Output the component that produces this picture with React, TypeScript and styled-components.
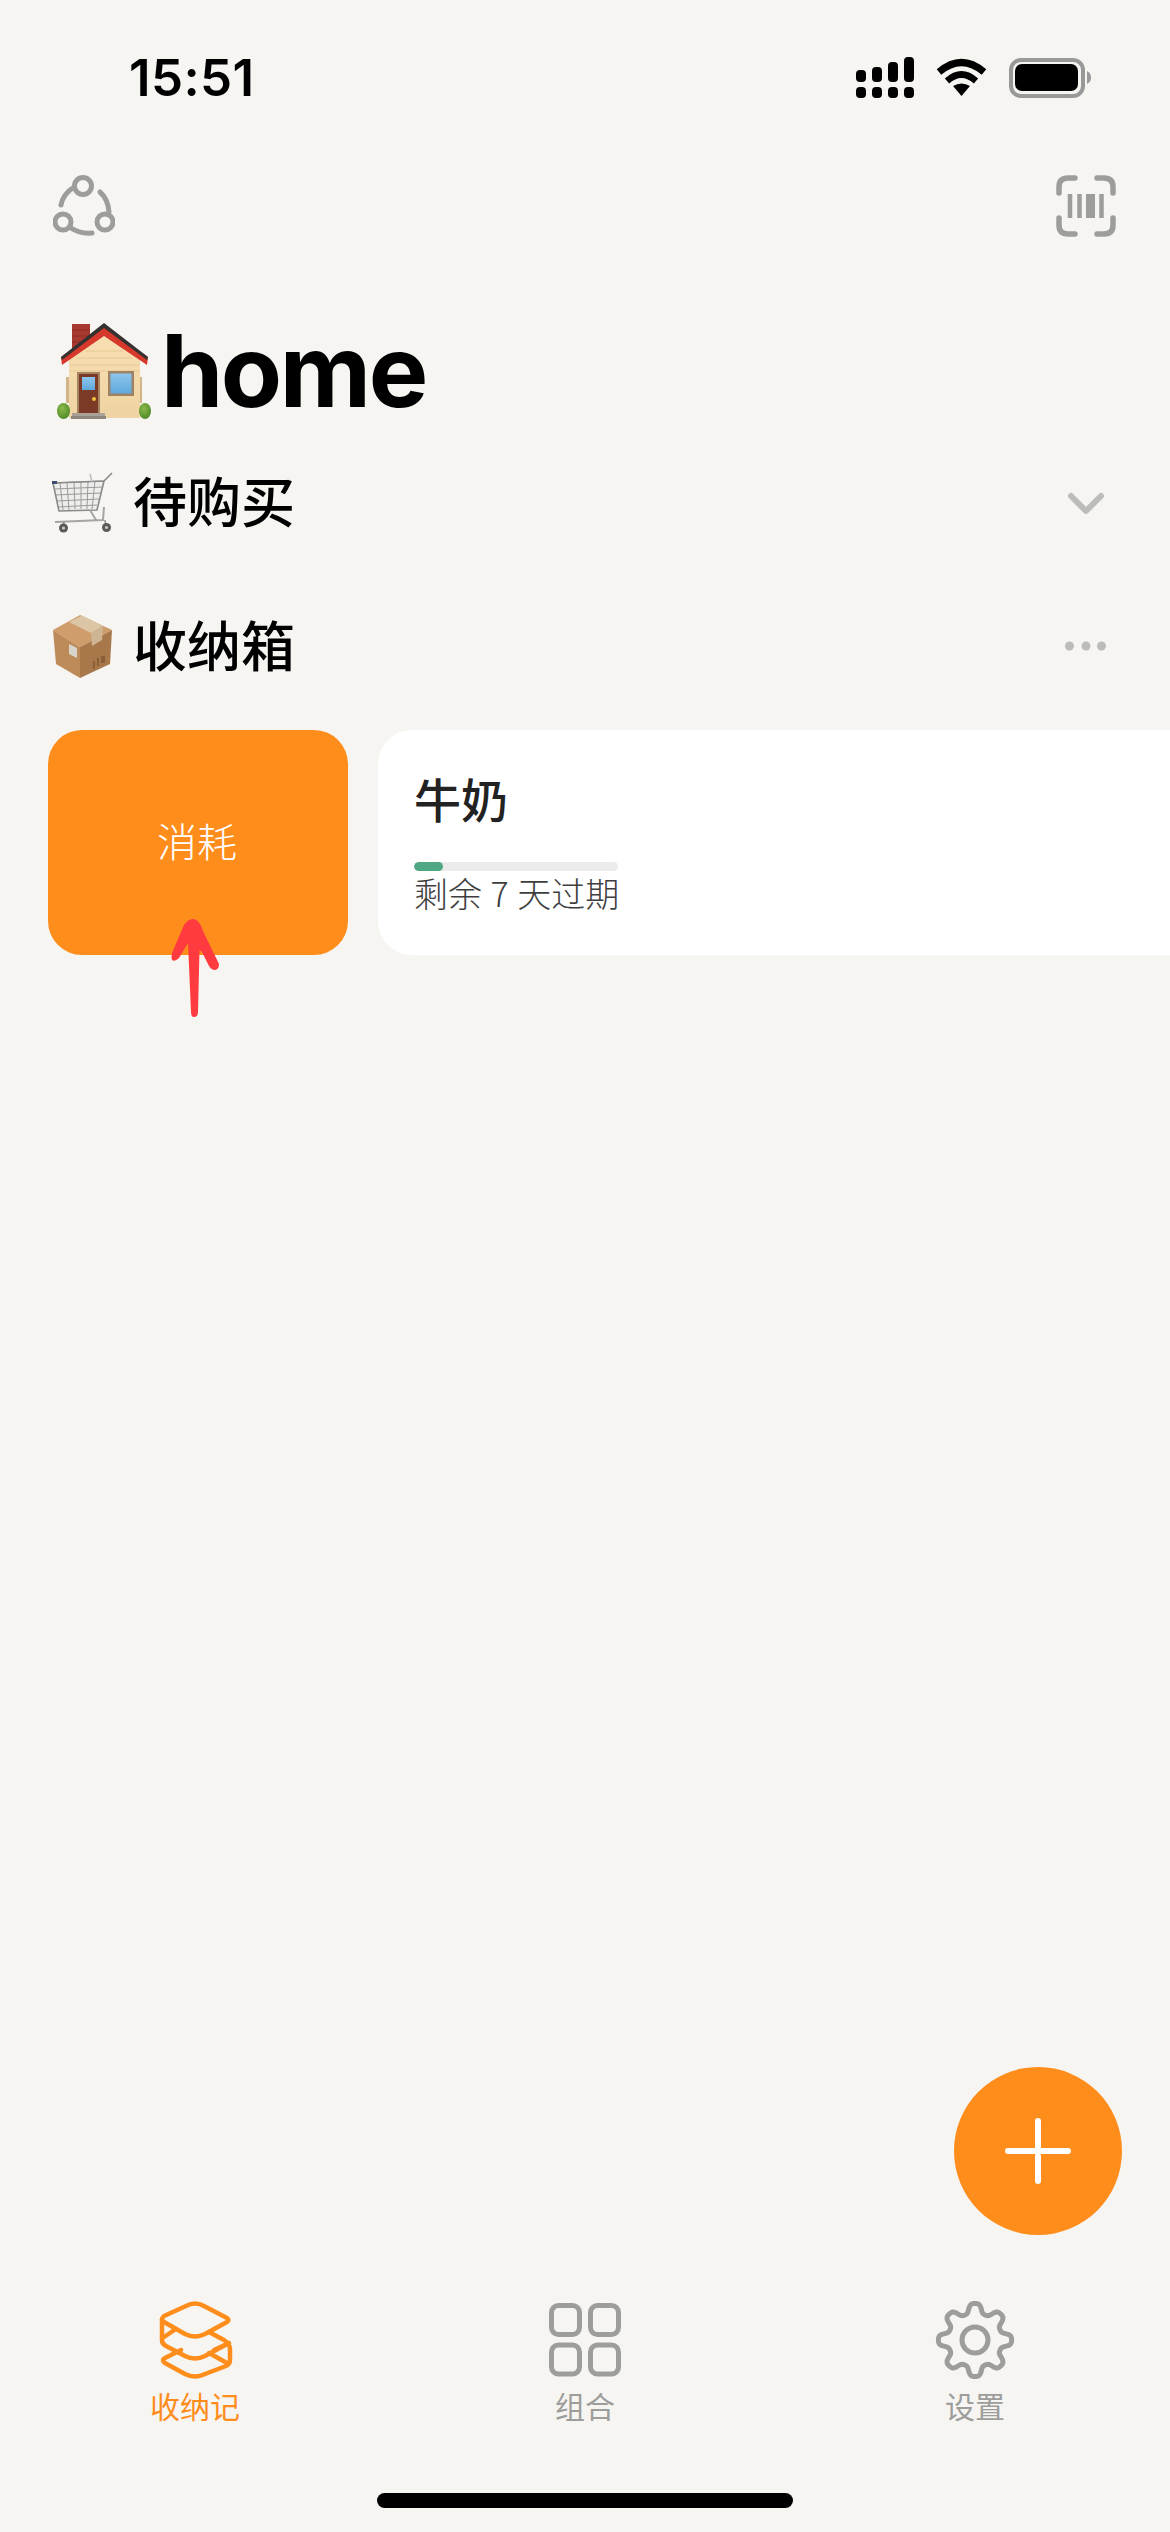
import React from "react";
import styled, { createGlobalStyle } from "styled-components";

const ORANGE = "#ff8d1c";
const GREY = "#9d9d9b";
const CJK = `"Noto Sans CJK SC", "Noto Sans", sans-serif`;

const Global = createGlobalStyle`
  html, body { margin: 0; padding: 0; background: #f6f5f2; }
  * { box-sizing: border-box; }
`;

const Page = styled.div`
  position: relative;
  width: 1170px;
  height: 2532px;
  overflow: hidden;
  display: flex;
  flex-direction: column;
  background: #f6f5f2;
  font-family: Inter, ${CJK};
`;

const StatusBar = styled.div`
  height: 175px;
  padding: 56px 79px 0 129px;
  display: flex;
  justify-content: space-between;
  align-items: flex-start;
`;
const Clock = styled.div`
  font-size: 51px;
  line-height: 44px;
  font-weight: 600;
  letter-spacing: 0.4px;
  color: #000;
`;
const StatusIcons = styled.svg`
  display: block;
  width: 235px;
  height: 44px;
`;

const TopBar = styled.div`
  height: 62px;
  padding: 0 53px;
  display: flex;
  justify-content: space-between;
  align-items: center;
`;
const Title = styled.h1`
  margin: 81px 0 0 57px;
  height: 105px;
  display: flex;
  align-items: center;
  gap: 10px;
  font-size: 100px;
  line-height: 105px;
  font-weight: 700;
  letter-spacing: -2.4px;
  color: #000;
`;
const Section = styled.div<{ $mt: number }>`
  margin-top: ${(p) => p.$mt}px;
  height: 64px;
  padding: 0 64px 0 52px;
  display: flex;
  align-items: center;
`;
const SectionName = styled.div`
  margin-left: 20px;
  flex: 1;
  padding-bottom: 4px;
  font-family: ${CJK};
  font-size: 54px;
  line-height: 60px;
  font-weight: 500;
  color: #000;
`;
const CardRow = styled.div`
  margin-top: 52px;
  padding-left: 48px;
  display: flex;
  gap: 30px;
  height: 225px;
`;
const ActionCard = styled.div`
  position: relative;
  width: 300px;
  border-radius: 34px;
  background: ${ORANGE};
  display: flex;
  align-items: center;
  justify-content: center;
  padding: 0 2px 5px 0;
  font-family: ${CJK};
  font-size: 40px;
  font-weight: 300;
  color: #fff;
`;
const ArrowMark = styled.svg`
  position: absolute;
  left: 120px;
  top: 185px;
  width: 54px;
  height: 105px;
`;
const ItemCard = styled.div`
  flex: 1;
  border-radius: 34px 0 0 34px;
  background: #fff;
  padding: 40px 0 0 36px;
`;
const ItemName = styled.div`
  font-family: ${CJK};
  font-size: 47px;
  line-height: 56px;
  font-weight: 500;
  color: #222;
`;
const Track = styled.div`
  margin-top: 36px;
  width: 204px;
  height: 9px;
  border-radius: 5px;
  background: #ebebeb;
  overflow: hidden;
`;
const Fill = styled.div`
  height: 100%;
  border-radius: 5px;
  background: #4fa883;
`;
const Remaining = styled.div`
  margin-top: 1px;
  font-family: ${CJK};
  font-size: 34px;
  line-height: 42px;
  font-weight: 300;
  word-spacing: 1px;
  color: #3f3f3f;
  white-space: nowrap;
`;
const Spacer = styled.div`
  flex: 1;
`;
const Fab = styled.div`
  position: absolute;
  left: 954px;
  top: 2067px;
  width: 168px;
  height: 168px;
  border-radius: 50%;
  background: ${ORANGE};
  display: flex;
  align-items: center;
  justify-content: center;
`;
const TabBar = styled.nav`
  display: grid;
  grid-template-columns: repeat(3, 390px);
`;
const Tab = styled.div<{ $active?: boolean }>`
  display: flex;
  flex-direction: column;
  align-items: center;
  gap: 3px;
  font-family: ${CJK};
  font-size: 30px;
  line-height: 44px;
  font-weight: 400;
  color: ${(p) => (p.$active ? ORANGE : GREY)};
`;
const TabIcon = styled.svg`
  display: block;
  width: 80px;
  height: 80px;
`;
const HomeLine = styled.div`
  margin: 66px auto 24px;
  width: 416px;
  height: 15px;
  border-radius: 8px;
  background: #000;
`;

const gearPath = (() => {
  const pts: string[] = [];
  for (let i = 0; i < 240; i++) {
    const t = (i / 240) * Math.PI * 2;
    const w = Math.tanh(1.6 * Math.cos(8 * t)) / Math.tanh(1.6);
    const r = 31.8 + 4.8 * w;
    pts.push(`${(40 + r * Math.cos(t)).toFixed(2)} ${(40 + r * Math.sin(t)).toFixed(2)}`);
  }
  return `M${pts.join("L")}Z`;
})();

const HouseEmoji = () => (
  <svg width="94" height="96" viewBox="57 322 94 96" style={{ flex: "none" }}>
    <defs>
      <linearGradient id="wall" x1="0" y1="0" x2="0" y2="1">
        <stop offset="0" stopColor="#f8e0b4" />
        <stop offset="1" stopColor="#efd3a2" />
      </linearGradient>
      <linearGradient id="glass" x1="0" y1="0" x2="0" y2="1">
        <stop offset="0" stopColor="#8cc6ec" />
        <stop offset="1" stopColor="#5fa8dc" />
      </linearGradient>
      <radialGradient id="bush" cx=".4" cy=".35" r=".7">
        <stop offset="0" stopColor="#8cb84a" />
        <stop offset="1" stopColor="#4c8a26" />
      </radialGradient>
    </defs>
    <rect x="72" y="323" width="18" height="28" fill="#a8392f" />
    <path d="M72 329H90M72 335H90M72 341H90" stroke="#8f2d25" strokeWidth="1" />
    <rect x="66" y="376" width="3" height="26" fill="#d2b38a" />
    <rect x="139" y="376" width="3" height="26" fill="#d2b38a" />
    <path d="M69 358 L104 330 L140 358 V417 H69Z" fill="url(#wall)" />
    <path d="M85 350H123M76 357H132M70 364H139M70 370H139" stroke="#e4c691" strokeWidth="0.8" />
    <path d="M61 356 L104 325 L148 356 L147 364 L104 335 L62 364Z" fill="#d6392c" />
    <path d="M61 356 L104 322 L148 356 L147 359 L104 327 L62 359Z" fill="#35312f" />
    <rect x="77" y="371" width="23" height="41" fill="#a58462" />
    <rect x="79" y="373" width="19" height="39" fill="#7b3a26" />
    <rect x="82" y="376" width="13" height="13" fill="url(#glass)" />
    <circle cx="94" cy="398" r="2" fill="#f3c23c" />
    <rect x="108" y="370" width="26" height="25" fill="#9d8266" />
    <rect x="110.500" y="372.500" width="21" height="20" fill="url(#glass)" />
    <rect x="72" y="412" width="33" height="3" fill="#a9a196" />
    <rect x="71" y="415" width="35" height="3" fill="#8d867c" />
    <ellipse cx="63.500" cy="410" rx="6.500" ry="8" fill="url(#bush)" />
    <ellipse cx="145" cy="410" rx="6" ry="8" fill="url(#bush)" />
  </svg>
);

const CartEmoji = () => (
  <svg width="61" height="61" viewBox="52 472 61 61" style={{ flex: "none" }}>
    <path d="M53 483 L104 481 L97 509 L59 510Z" fill="#e6e6e6" opacity=".55" />
    <path
      d="M53 483L104 481M54 489L103 487M55 495L101 493M57 501L99 499M58 507L97 505M60 483L63 510M67 483L69 510M74 482L75 509M81 482L81 509M88 482L87 509M95 481L92 509"
      stroke="#9b9b9b"
      strokeWidth="1"
      fill="none"
    />
    <path d="M53 483 L104 481 L112 473 M104 481 L97 510 L59 511 L53 483" stroke="#8a8a8a" strokeWidth="1.600" fill="none" />
    <path d="M90 474 L92 482" stroke="#bbb" strokeWidth="1.500" />
    <rect x="52" y="481" width="5" height="3" fill="#3c4c74" />
    <path d="M55 522 L103 520 L104 507 M90 510 L96 520" stroke="#a5a5a5" strokeWidth="2" fill="none" />
    <path d="M64 522 L63 527 M105 520 L106 527" stroke="#888" strokeWidth="1.500" />
    <circle cx="63.500" cy="528" r="4.500" fill="#5c5a58" />
    <circle cx="63.500" cy="528" r="1.600" fill="#c9c9c9" />
    <circle cx="106.500" cy="527.500" r="4.500" fill="#5c5a58" />
    <circle cx="106.500" cy="527.500" r="1.600" fill="#c9c9c9" />
  </svg>
);

const BoxEmoji = () => (
  <svg width="61" height="63" viewBox="52 615 61 63" style={{ flex: "none" }}>
    <path d="M80 615 L112 630 L80 647 L53 630Z" fill="#cf9d6b" />
    <path d="M53 630 L80 647 L80 678 L56 664Z" fill="#bd8b59" />
    <path d="M112 630 L80 647 L80 678 L110 664Z" fill="#a9784a" />
    <path d="M69 622 L82 615.500 L103 626 L91 633Z" fill="#dcc6a6" />
    <path d="M91 633 L103 626 L102 640 L92 646Z" fill="#cdb594" />
    <path d="M69 644 L77 648 L77 658 L69 654Z" fill="#d9d5cc" />
    <path d="M94 661v8M98 658v8M104 656v7M102 656v7" stroke="#7f5532" strokeWidth="1.400" />
  </svg>
);

const ShareIcon = () => (
  <svg width="62" height="62" viewBox="53 175 62 62" fill="none" stroke={GREY} strokeWidth="5" strokeLinecap="round">
    <circle cx="83" cy="186" r="8.500" />
    <circle cx="63" cy="222" r="8" />
    <circle cx="105" cy="222" r="8" />
    <path d="M61 205 Q63 194 74 187" />
    <path d="M100 192 Q108 199 109 212" />
    <path d="M71 228 Q80 234 92 233" />
  </svg>
);

const BarcodeIcon = () => (
  <svg width="62" height="62" viewBox="1055 176 62 62" fill="none" stroke={GREY} strokeWidth="5.500" strokeLinecap="round">
    <path d="M1059 194V188Q1059 179 1068 179H1075" />
    <path d="M1097 179H1104Q1113 179 1113 188V194" />
    <path d="M1059 219V226Q1059 235 1068 235H1075" />
    <path d="M1097 235H1104Q1113 235 1113 226V219" />
    <path d="M1070 195V219M1079.500 195V219M1101.500 195V219" strokeLinecap="butt" strokeWidth="4.500" />
    <path d="M1090.500 195V219" strokeLinecap="butt" strokeWidth="9" />
  </svg>
);

export default function App() {
  return (
    <Page>
      <Global />
      <StatusBar>
        <Clock>15:51</Clock>
        <StatusIcons viewBox="856 56 235 44">
          <g fill="#000">
            <rect x="856" y="70" width="10" height="12" rx="4" />
            <rect x="872" y="67" width="10" height="15" rx="4" />
            <rect x="888" y="62" width="10" height="20" rx="4" />
            <rect x="904" y="57" width="10" height="25" rx="4" />
            <rect x="856" y="87" width="10" height="11" rx="4" />
            <rect x="872" y="87" width="10" height="11" rx="4" />
            <rect x="888" y="87" width="10" height="11" rx="4" />
            <rect x="904" y="87" width="10" height="11" rx="4" />
            <path d="M953 86 Q961.500 81 970 86 L961.500 96Z" />
          </g>
          <path d="M939 72 Q961.500 53 984 72" stroke="#000" strokeWidth="7" fill="none" />
          <path d="M947 81 Q961.500 68 976 81" stroke="#000" strokeWidth="6.500" fill="none" />
          <rect x="1011" y="60" width="72" height="36" rx="10" fill="none" stroke="#999" strokeWidth="4" />
          <rect x="1015" y="64" width="63" height="27" rx="7" fill="#000" />
          <path d="M1087 71 Q1091 73 1091 77.500 Q1091 82 1087 84Z" fill="#999" />
        </StatusIcons>
      </StatusBar>

      <TopBar>
        <ShareIcon />
        <BarcodeIcon />
      </TopBar>

      <Title>
        <HouseEmoji />
        home
      </Title>

      <Section $mt={47}>
        <CartEmoji />
        <SectionName>待购买</SectionName>
        <svg width="42" height="24" viewBox="1064 490 42 24" fill="none" stroke="#bcbcba" strokeWidth="6" strokeLinecap="round" strokeLinejoin="round">
          <path d="M1071 496 L1086 511 L1101 496" />
        </svg>
      </Section>

      <Section $mt={80}>
        <BoxEmoji />
        <SectionName>收纳箱</SectionName>
        <svg width="42" height="10" viewBox="1064 641 42 10" fill="#bcbcba">
          <circle cx="1069.500" cy="646" r="4.500" />
          <circle cx="1086" cy="646" r="4.500" />
          <circle cx="1101.500" cy="646" r="4.500" />
        </svg>
      </Section>

      <CardRow>
        <ActionCard>
          消耗
          <ArrowMark viewBox="168 915 54 105">
            <path
              d="M193 919C198 919 201 925 203 931L219 964Q219 970 214 970Q210 969 208 964L202 952L199.500 950L198 1012Q198 1017 194 1017Q191 1017 191 1012L188 943L179 958Q175 962 172 960Q171 957 172 953L184 925Q188 919 193 919Z"
              fill="#ff3b40"
            />
          </ArrowMark>
        </ActionCard>
        <ItemCard>
          <ItemName>牛奶</ItemName>
          <Track>
            <Fill style={{ width: `${(29 / 204) * 100}%` }} />
          </Track>
          <Remaining>剩余 7 天过期</Remaining>
        </ItemCard>
      </CardRow>

      <Spacer />

      <Fab>
        <svg width="66" height="66" viewBox="0 0 66 66" stroke="#fff" strokeWidth="6" strokeLinecap="round">
          <path d="M3 33H63M33 3V30M33 38V63" />
        </svg>
      </Fab>

      <TabBar>
        <Tab $active>
          <TabIcon viewBox="155 2300 80 80" fill="none" stroke={ORANGE} strokeWidth="4.500" strokeLinejoin="round" strokeLinecap="round">
            <path d="M186 2306Q195 2301 204 2306L227 2318Q230 2320 227 2322L205 2334Q195 2339 185 2334L164 2322Q160 2320 164 2316Z" />
            <path d="M162 2319V2340Q162 2344 166 2346L185 2356Q195 2361 205 2356L229 2343" />
            <path d="M209 2332L224 2340Q230 2344 230 2349V2360Q230 2364 226 2366L205 2374Q195 2379 185 2374L165 2363Q161 2360 165 2358L181 2350" />
            <path d="M176 2329L164 2337M214 2350L227 2344M209 2353L227 2363" />
          </TabIcon>
          收纳记
        </Tab>
        <Tab>
          <TabIcon viewBox="545 2300 80 80" fill="none" stroke={GREY} strokeWidth="5">
            <rect x="551.500" y="2305.500" width="28" height="29" rx="7" />
            <rect x="590.500" y="2305.500" width="28" height="29" rx="7" />
            <rect x="551.500" y="2345" width="28" height="29" rx="7" />
            <rect x="590.500" y="2345" width="28" height="29" rx="7" />
          </TabIcon>
          组合
        </Tab>
        <Tab>
          <TabIcon viewBox="0 0 80 80" fill="none" stroke={GREY} strokeWidth="5">
            <path d={gearPath} strokeLinejoin="round" />
            <circle cx="40" cy="40" r="13" />
          </TabIcon>
          设置
        </Tab>
      </TabBar>
      <HomeLine />
    </Page>
  );
}
